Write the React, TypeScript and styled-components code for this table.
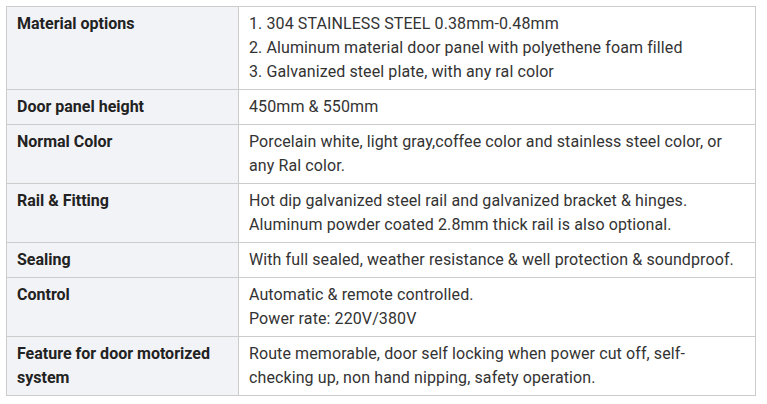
import React from "react";
import styled, { createGlobalStyle } from "styled-components";

const Global = createGlobalStyle`
  html, body { margin: 0; padding: 0; background: #ffffff; }
  body { font-family: Roboto, "Noto Sans", Arial, sans-serif; }
`;

const Wrap = styled.div`
  padding: 6px 11px 0 6px;
`;

const Table = styled.table`
  width: 750px;
  border-collapse: collapse;
  font-size: 16px;
  line-height: 24px;
  color: #333333;
`;

const Row = styled.tr``;

const Label = styled.th`
  width: 211px;
  text-align: left;
  vertical-align: top;
  font-weight: 700;
  color: #222222;
  background: #f2f3f7;
  border: 1px solid #cccccc;
  padding: 5px 10px;
`;

const Value = styled.td`
  vertical-align: top;
  border: 1px solid #cccccc;
  padding: 5px 10px;
  letter-spacing: 0.1px;
`;

const Line = styled.div``;

const rows: { label: string; lines: string[] }[] = [
  {
    label: "Material options",
    lines: [
      "1. 304 STAINLESS STEEL 0.38mm-0.48mm",
      "2. Aluminum material door panel with polyethene foam filled",
      "3. Galvanized steel plate, with any ral color",
    ],
  },
  { label: "Door panel height", lines: ["450mm & 550mm"] },
  {
    label: "Normal Color",
    lines: [
      "Porcelain white, light gray,coffee color and stainless steel color, or",
      "any Ral color.",
    ],
  },
  {
    label: "Rail & Fitting",
    lines: [
      "Hot dip galvanized steel rail and galvanized bracket & hinges.",
      "Aluminum powder coated 2.8mm thick rail is also optional.",
    ],
  },
  {
    label: "Sealing",
    lines: ["With full sealed, weather resistance & well protection & soundproof."],
  },
  {
    label: "Control",
    lines: ["Automatic & remote controlled.", "Power rate: 220V/380V"],
  },
  {
    label: "Feature for door motorized system",
    lines: [
      "Route memorable, door self locking when power cut off, self-",
      "checking up, non hand nipping, safety operation.",
    ],
  },
];

export default function App() {
  return (
    <>
      <Global />
      <Wrap>
        <Table>
          <tbody>
            {rows.map((r) => (
              <Row key={r.label}>
                <Label>{r.label}</Label>
                <Value>
                  {r.lines.map((l, i) => (
                    <Line key={i}>{l}</Line>
                  ))}
                </Value>
              </Row>
            ))}
          </tbody>
        </Table>
      </Wrap>
    </>
  );
}
